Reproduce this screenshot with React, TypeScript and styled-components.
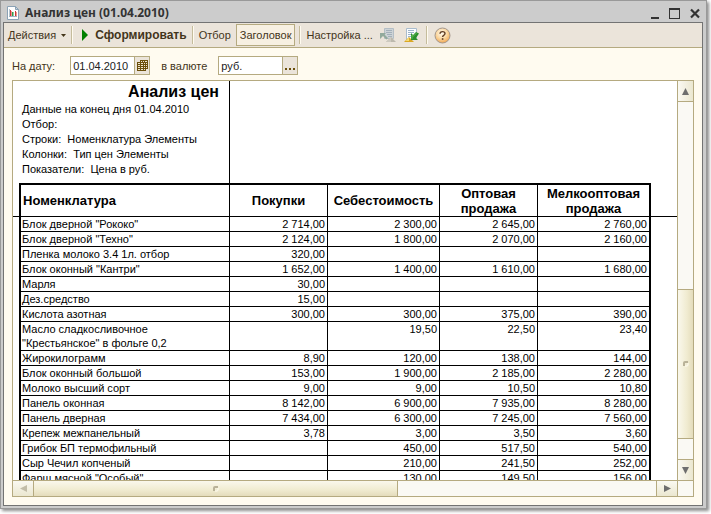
import React from "react";
import styled, { createGlobalStyle } from "styled-components";

const line = "#b5aa80";
const ink = "#43351a";

const Global = createGlobalStyle`
  *, *::before, *::after { box-sizing: border-box; }
  body { margin: 0; background: #fff; font-family: "Liberation Sans", Arial, sans-serif; font-size: 11px; color: ${ink}; }
  button, input { font: inherit; color: inherit; }
`;

const Desktop = styled.div`
  display: flex;
  height: 100vh;
  padding: 0 4px 5px 0;
`;

const Window = styled.section`
  flex: 1;
  min-width: 0;
  display: flex;
  flex-direction: column;
  padding: 0 3px 2px 2px;
  background: #ccc;
  border: 1px solid #999;
  box-shadow: 2px 2px 3px rgba(0, 0, 0, 0.45);
`;

const TitleBar = styled.header`
  display: flex;
  align-items: center;
  height: 21px;
  padding: 3px 2px 0 4px;
`;

const Title = styled.h1`
  flex: 1;
  margin: 0 0 0 6px;
  font: bold 12px/16px "Noto Sans", sans-serif;
  color: #333;
`;

const WindowButton = styled.button`
  display: flex;
  padding: 0;
  margin-left: 8px;
  border: 0;
  background: none;
`;

const Client = styled.main`
  flex: 1;
  min-height: 0;
  display: flex;
  flex-direction: column;
  border: 1px solid #737373;
  background: #fffbf0;
`;

const Toolbar = styled.div`
  display: flex;
  align-items: center;
  height: 25px;
  padding-left: 1px;
  background: #ebe4da;
  border-bottom: 1px solid ${line};
`;

const ToolButton = styled.button<{ $bold?: boolean; $pressed?: boolean }>`
  display: flex;
  align-items: center;
  gap: 5px;
  height: 22px;
  margin: 0 ${(p) => (p.$pressed ? 2 : 0)}px;
  padding: 0 ${(p) => (p.$pressed ? 3 : 2)}px;
  white-space: nowrap;
  border: 1px solid ${(p) => (p.$pressed ? line : "transparent")};
  background: ${(p) => (p.$pressed ? "#f7f0e2" : "none")};
  font-size: ${(p) => (p.$bold ? 12 : 11)}px;
  font-weight: ${(p) => (p.$bold ? "bold" : "normal")};
`;

const IconButton = styled.button`
  display: flex;
  padding: 0;
  margin: 0 4px;
  border: 0;
  background: none;
`;

const Separator = styled.span`
  width: 2px;
  height: 18px;
  margin: 0 2px;
  border-left: 1px solid #c5bc9c;
  border-right: 1px solid #fffbf0;
`;

const Filters = styled.form`
  display: flex;
  align-items: center;
  padding: 8px 8px 5px;
`;

const FieldLabel = styled.label<{ $gap: number }>`
  margin-right: ${(p) => p.$gap}px;
`;

const Field = styled.span`
  display: flex;
  width: 80px;
  height: 19px;
  margin-right: 11px;
  border: 1px solid ${line};
  background: #fff;
`;

const FieldInput = styled.input`
  flex: 1;
  min-width: 0;
  padding: 0 2px;
  border: 0;
  outline: 0;
  background: transparent;
  color: #222;
`;

const FieldButton = styled.button`
  display: flex;
  align-items: center;
  justify-content: center;
  width: 15px;
  padding: 0;
  border: 0;
  border-left: 1px solid ${line};
  background: #ebe4da;
`;

const Viewer = styled.div`
  flex: 1;
  min-height: 0;
  display: grid;
  grid-template: minmax(0, 1fr) 16px / minmax(0, 1fr) 16px;
  margin: 0 8px 8px;
  border: 1px solid ${line};
`;

const Sheet = styled.div`
  overflow: hidden;
  background: #fff;
  color: #000;
  font-size: 11px;
`;

const Summary = styled.div`
  width: 217px;
  padding: 0 10px 6px 9px;
  border-right: 1px solid #000;
  line-height: 15px;
  white-space: pre;
`;

const SummaryTitle = styled.h2`
  margin: 0;
  font-size: 16px;
  line-height: 21px;
  text-align: right;
`;

const SummaryLine = styled.p`
  margin: 0;
`;

const Table = styled.table`
  width: 100%;
  table-layout: fixed;
  border-collapse: separate;
  border-spacing: 0;
`;

const Col = styled.col<{ $width?: number }>`
  width: ${(p) => (p.$width ? `${p.$width}px` : "auto")};
`;

const HeadCell = styled.th`
  height: 34px;
  padding: 0 2px;
  border: solid #000;
  border-width: 2px 1px 1px 0;
  font-size: 13px;
  line-height: 15px;
  vertical-align: middle;
  &:nth-child(2) { border-left-width: 2px; text-align: left; }
  &:nth-last-child(2) { border-right-width: 2px; }
`;

const HeadGutter = styled.td`
  padding: 0;
  border-bottom: 1px solid #000;
`;

const Gutter = styled.td`
  padding: 0;
`;

const NameCell = styled.td`
  padding: 0 1px;
  border: solid #000;
  border-width: 0 1px 1px 2px;
  line-height: 14px;
  white-space: pre-line;
  vertical-align: top;
`;

const ValueCell = styled.td`
  padding: 0 2px;
  border: solid #000;
  border-width: 0 1px 1px 0;
  line-height: 14px;
  text-align: right;
  white-space: nowrap;
  vertical-align: top;
  &:nth-last-child(2) { border-right-width: 2px; }
`;

const ScrollBar = styled.div<{ $vertical?: boolean }>`
  display: flex;
  flex-direction: ${(p) => (p.$vertical ? "column" : "row")};
  border: 0 solid ${line};
  border-left-width: ${(p) => (p.$vertical ? 1 : 0)}px;
  border-top-width: ${(p) => (p.$vertical ? 0 : 1)}px;
  background: #faf9f4;
`;

const ScrollButton = styled.button<{ $vertical?: boolean; $edge?: "top" | "left" | "bottom" }>`
  flex: 0 0 ${(p) => (p.$edge ? 21 : 20)}px;
  display: flex;
  align-items: center;
  justify-content: center;
  padding: 0;
  border: 0 solid ${line};
  ${(p) => p.$edge && `border-${p.$edge}-width: 1px;`}
  background: linear-gradient(${(p) => (p.$vertical ? "to right" : "to bottom")}, #faf9f2, #ebe7d0);
`;

const Track = styled.div<{ $grow: number }>`
  flex: ${(p) => p.$grow} 1 0;
`;

const Thumb = styled.div<{ $grow: number; $vertical?: boolean }>`
  flex: ${(p) => p.$grow} 1 0;
  display: flex;
  align-items: center;
  justify-content: center;
  border: solid ${line};
  border-width: ${(p) => (p.$vertical ? "1px 0" : "0 1px")};
  background: linear-gradient(${(p) => (p.$vertical ? "to right" : "to bottom")}, #faf8ec, #f0ebd0 60%, #e4dcbb);
`;

const Corner = styled.div`
  border: solid ${line};
  border-width: 1px 0 0 1px;
  background: #faf9f4;
`;

const Grip = () => (
  <svg width="6" height="6" viewBox="0 0 6 6" aria-hidden="true">
    <path d="M5 1H2Q1 1 1 2V5" fill="none" stroke="#b9b298" strokeWidth="2" />
    <path d="M2 5h2q1 0 1-1V2" fill="none" stroke="#fffdf2" />
  </svg>
);

const Arrow = ({ turn, color = "#6e6e6e" }: { turn: number; color?: string }) => (
  <svg width="9" height="9" viewBox="0 0 9 9" aria-hidden="true">
    <path d="M4.5 1 8 8H1Z" fill={color} transform={`rotate(${turn} 4.5 4.5)`} />
  </svg>
);

const ReportIcon = () => (
  <svg width="12" height="14" viewBox="0 0 12 14" aria-hidden="true">
    <path d="M.5.5h8l3 3v10H.5Z" fill="#fff" stroke="#8ba2b5" />
    <path d="M8.5.5v3h3Z" fill="#cbd9e4" stroke="#8ba2b5" />
    <path d="M2 3h1v7H2Z" fill="#b5c5d1" />
    <path d="M3 4h1v6H3Z" fill="#c9383a" />
    <path d="M4 5h1v5H4Z" fill="#f09a90" />
    <path d="M5 6h1v4H5Z" fill="#2d9a50" />
    <path d="M6 6h1v4H6Z" fill="#8bd09b" />
    <path d="M8 5h1v5H8Z" fill="#c9383a" />
    <path d="M9 6h1v4H9Z" fill="#f09a90" />
    <path d="M2 10.5h8" stroke="#9fb3c2" />
  </svg>
);

const CalendarIcon = () => (
  <svg width="11" height="11" viewBox="0 0 11 11" aria-hidden="true">
    <path d="M3 0h8v9H9v2H0V2h3Z" fill="#6b4f0c" />
    <path
      d="M4 1h1v1H4zM6 1h1v1H6zM8 1h2v1H8zM1 3h2v1H1zM4 3h2v1H4zM7 3h1v1H7zM9 3h1v1H9zM1 5h2v1H1zM4 5h2v1H4zM7 5h1v1H7zM9 5h1v1H9zM1 7h2v1H1zM4 7h2v1H4zM7 7h1v1H7zM9 7h1v1H9zM1 9h2v1H1zM4 9h2v1H4zM7 9h1v1H7z"
      fill="#efe7d3"
    />
  </svg>
);

const RestoreIcon = () => (
  <svg width="16" height="16" viewBox="0 0 16 16" aria-hidden="true">
    <path d="M4.500 1.500h9v10h-9Z" fill="#cdd3d6" stroke="#b4bec5" />
    <path d="M6 3.500h6M6 5.500h6M7 7.500h5M8 9.500h4" stroke="#a3b0ba" />
    <path d="M0 6h6L4.500 7.500 8 11 6.500 12.500 3 9 0 12Z" fill="#92aa9c" />
    <path d="M6 15l5-5 5 5Z" fill="#bdb9ad" />
    <path d="M11 10v5H6Z" fill="#cdcac0" />
  </svg>
);

const SaveIcon = () => (
  <svg width="16" height="16" viewBox="0 0 16 16" aria-hidden="true">
    <path d="M2.500 1.500h10v11h-10Z" fill="#fbfdff" stroke="#a9bccd" />
    <path d="M4 3.500h6M4 5.500h6M4 7.500h4M4 9.500h3" stroke="#9db3ca" />
    <path d="M0 15l5-5 5 5Z" fill="#d9a826" />
    <path d="M5 10.500v3.500H1.500Z" fill="#f9dc72" />
    <path d="M7 13V6l2 2 3-3 3 1.500L12 11l2 2Z" fill="#2a8f2d" />
    <path d="M8 12V8l1 1.500L12.500 6" fill="none" stroke="#62bb55" />
  </svg>
);

const HelpIcon = () => (
  <svg width="17" height="17" viewBox="0 0 17 17" aria-hidden="true">
    <defs>
      <radialGradient id="help" cx=".45" cy=".35" r=".7">
        <stop offset="0" stopColor="#fffaf0" />
        <stop offset=".5" stopColor="#fbd9a4" />
        <stop offset="1" stopColor="#ee9f45" />
      </radialGradient>
    </defs>
    <circle cx="8.5" cy="8.5" r="7.500" fill="url(#help)" stroke="#a3978d" />
    <path d="M6 6.800Q6 4.600 8.500 4.600T11 6.600Q11 7.700 9.700 8.400 8.600 9 8.600 10" fill="none" stroke="#5f3c22" strokeWidth="1.400" />
    <path d="M7.800 11.200h1.600v1.600H7.800Z" fill="#5f3c22" />
  </svg>
);

const columns = ["Покупки", "Себестоимость", "Оптовая продажа", "Мелкооптовая продажа"];

const rows: string[][] = [
  ["Блок дверной \"Рококо\"", "2 714,00", "2 300,00", "2 645,00", "2 760,00"],
  ["Блок дверной \"Техно\"", "2 124,00", "1 800,00", "2 070,00", "2 160,00"],
  ["Пленка молоко 3.4 1л. отбор", "320,00", "", "", ""],
  ["Блок оконный \"Кантри\"", "1 652,00", "1 400,00", "1 610,00", "1 680,00"],
  ["Марля", "30,00", "", "", ""],
  ["Дез.средство", "15,00", "", "", ""],
  ["Кислота азотная", "300,00", "300,00", "375,00", "390,00"],
  ["Масло сладкосливочное\n\"Крестьянское\" в фольге 0,2", "", "19,50", "22,50", "23,40"],
  ["Жирокилограмм", "8,90", "120,00", "138,00", "144,00"],
  ["Блок оконный большой", "153,00", "1 900,00", "2 185,00", "2 280,00"],
  ["Молоко высший сорт", "9,00", "9,00", "10,50", "10,80"],
  ["Панель оконная", "8 142,00", "6 900,00", "7 935,00", "8 280,00"],
  ["Панель дверная", "7 434,00", "6 300,00", "7 245,00", "7 560,00"],
  ["Крепеж межпанельный", "3,78", "3,00", "3,50", "3,60"],
  ["Грибок БП термофильный", "", "450,00", "517,50", "540,00"],
  ["Сыр Чечил копченый", "", "210,00", "241,50", "252,00"],
  ["Фарш мясной \"Особый\"", "", "130,00", "149,50", "156,00"],
];

export default function App() {
  return (
    <>
      <Global />
      <Desktop>
        <Window>
          <TitleBar>
            <ReportIcon />
            <Title>Анализ цен (01.04.2010)</Title>
            <WindowButton aria-label="Свернуть">
              <svg width="12" height="12"><path d="M2 10h8v2H2Z" fill="#333" /></svg>
            </WindowButton>
            <WindowButton aria-label="Развернуть">
              <svg width="12" height="12"><path d="M0 1h11v11H0ZM1 3v8h9V3Z" fill="#333" fillRule="evenodd" /></svg>
            </WindowButton>
            <WindowButton aria-label="Закрыть">
              <svg width="12" height="12"><path d="M2 2.500l8 8M10 2.500l-8 8" stroke="#333" strokeWidth="2.200" /></svg>
            </WindowButton>
          </TitleBar>
          <Client>
            <Toolbar>
              <ToolButton>
                Действия
                <svg width="5" height="3" aria-hidden="true"><path d="M0 0h5L2.500 3Z" fill={ink} /></svg>
              </ToolButton>
              <Separator />
              <ToolButton $bold>
                <svg width="12" height="12" aria-hidden="true"><path d="M4 0l6 6-6 6Z" fill="#008000" /></svg>
                Сформировать
              </ToolButton>
              <Separator />
              <ToolButton>Отбор</ToolButton>
              <ToolButton $pressed aria-pressed="true">Заголовок</ToolButton>
              <Separator />
              <ToolButton>Настройка ...</ToolButton>
              <IconButton aria-label="Восстановить настройки"><RestoreIcon /></IconButton>
              <IconButton aria-label="Сохранить настройки"><SaveIcon /></IconButton>
              <Separator />
              <IconButton aria-label="Справка"><HelpIcon /></IconButton>
            </Toolbar>
            <Filters onSubmit={(e) => e.preventDefault()}>
              <FieldLabel htmlFor="date" $gap={15}>На дату:</FieldLabel>
              <Field>
                <FieldInput id="date" defaultValue="01.04.2010" />
                <FieldButton type="button" aria-label="Календарь"><CalendarIcon /></FieldButton>
              </Field>
              <FieldLabel htmlFor="currency" $gap={11}>в валюте</FieldLabel>
              <Field>
                <FieldInput id="currency" defaultValue="руб." />
                <FieldButton type="button" aria-label="Выбрать валюту">
                  <svg width="10" height="8" aria-hidden="true"><path d="M0 6h2v2H0zM4 6h2v2H4zM8 6h2v2H8z" fill="#6b4f0c" /></svg>
                </FieldButton>
              </Field>
            </Filters>
            <Viewer>
              <Sheet>
                <Summary>
                  <SummaryTitle>Анализ цен</SummaryTitle>
                  <SummaryLine>Данные на конец дня 01.04.2010</SummaryLine>
                  <SummaryLine>Отбор:</SummaryLine>
                  <SummaryLine>{"Строки:  Номенклатура Элементы"}</SummaryLine>
                  <SummaryLine>{"Колонки:  Тип цен Элементы"}</SummaryLine>
                  <SummaryLine>{"Показатели:  Цена в руб."}</SummaryLine>
                </Summary>
                <Table>
                  <colgroup>
                    <Col $width={6} />
                    <Col $width={211} />
                    <Col $width={98} />
                    <Col $width={112} />
                    <Col $width={98} />
                    <Col $width={113} />
                    <Col />
                  </colgroup>
                  <thead>
                    <tr>
                      <HeadGutter />
                      <HeadCell scope="col">Номенклатура</HeadCell>
                      {columns.map((name) => <HeadCell scope="col" key={name}>{name}</HeadCell>)}
                      <HeadGutter />
                    </tr>
                  </thead>
                  <tbody>
                    {rows.map(([name, ...values]) => (
                      <tr key={name}>
                        <Gutter />
                        <NameCell>{name}</NameCell>
                        {values.map((value, i) => <ValueCell key={i}>{value}</ValueCell>)}
                        <Gutter />
                      </tr>
                    ))}
                  </tbody>
                </Table>
              </Sheet>
              <ScrollBar $vertical>
                <ScrollButton $vertical $edge="bottom" aria-label="Вверх"><Arrow turn={0} /></ScrollButton>
                <Track $grow={187} />
                <Thumb $grow={148} $vertical><Grip /></Thumb>
                <Track $grow={20} />
                <ScrollButton $vertical $edge="top" aria-label="Вниз"><Arrow turn={180} /></ScrollButton>
              </ScrollBar>
              <ScrollBar>
                <ScrollButton aria-label="Влево"><Arrow turn={270} color="#c2bda8" /></ScrollButton>
                <Thumb $grow={363}><Grip /></Thumb>
                <Track $grow={258} />
                <ScrollButton $edge="left" aria-label="Вправо"><Arrow turn={90} /></ScrollButton>
              </ScrollBar>
              <Corner />
            </Viewer>
          </Client>
        </Window>
      </Desktop>
    </>
  );
}
